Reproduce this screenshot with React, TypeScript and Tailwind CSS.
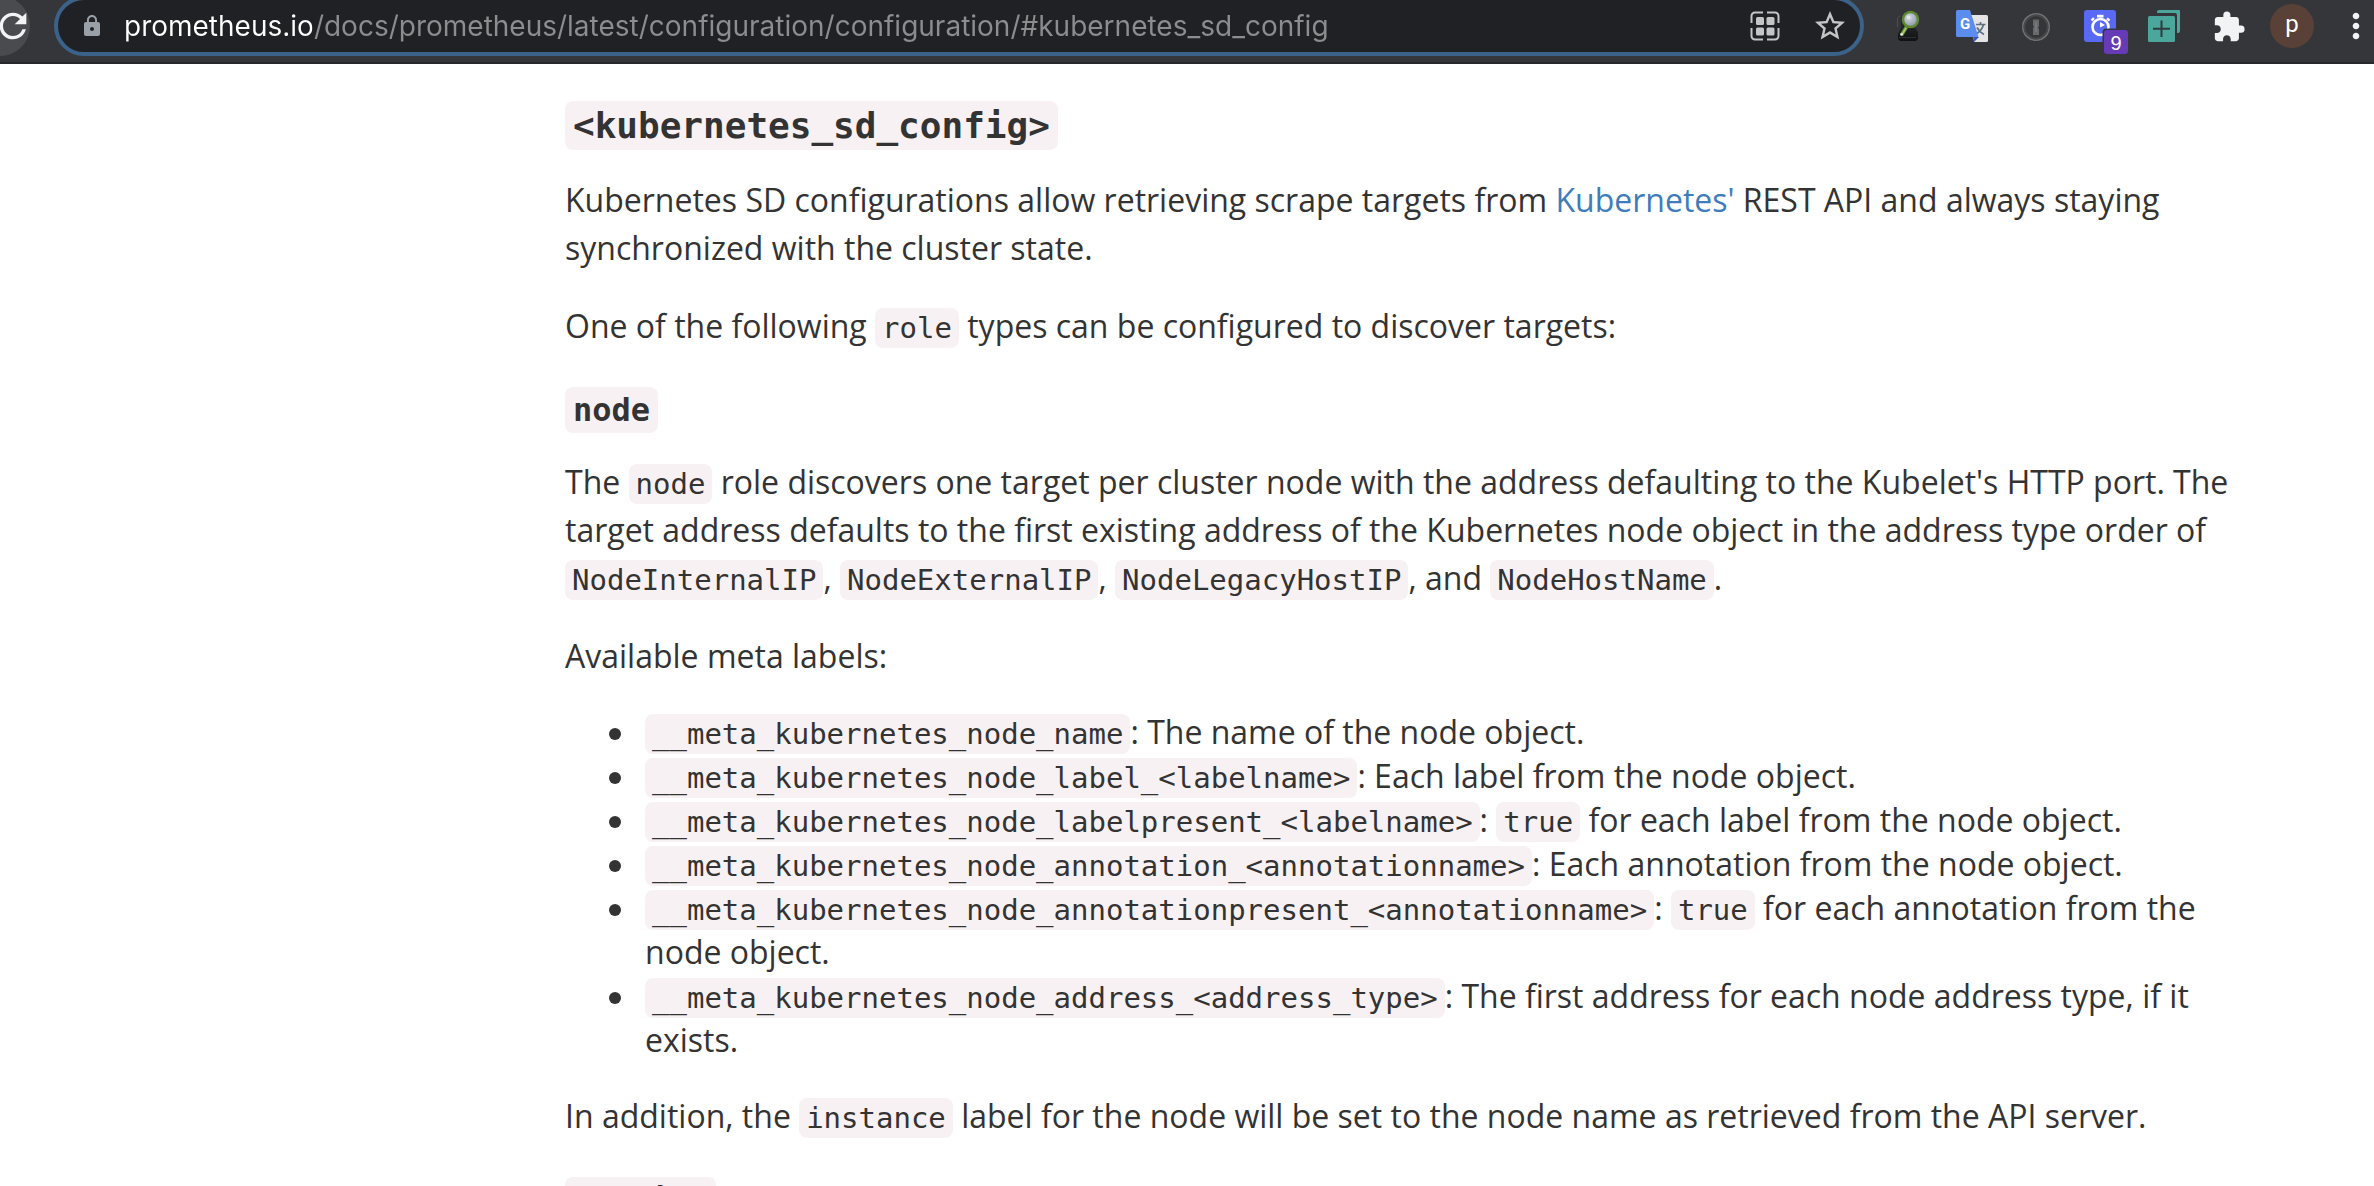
import type { ReactNode } from "react";
import { MdExtension, MdLock, MdMoreVert, MdRefresh, MdStarBorder } from "react-icons/md";

const metaLabels: { name: string; text: ReactNode }[] = [
  { name: "__meta_kubernetes_node_name", text: "The name of the node object." },
  { name: "__meta_kubernetes_node_label_<labelname>", text: "Each label from the node object." },
  {
    name: "__meta_kubernetes_node_labelpresent_<labelname>",
    text: (
      <>
        <Code>true</Code> for each label from the node object.
      </>
    ),
  },
  { name: "__meta_kubernetes_node_annotation_<annotationname>", text: "Each annotation from the node object." },
  {
    name: "__meta_kubernetes_node_annotationpresent_<annotationname>",
    text: (
      <>
        <Code>true</Code> for each annotation from the node object.
      </>
    ),
  },
  {
    name: "__meta_kubernetes_node_address_<address_type>",
    text: "The first address for each node address type, if it exists.",
  },
];

function Code({ children }: { children: ReactNode }) {
  return (
    <code className="rounded-lg bg-[#f8f1f4] px-[7px] py-[3px] font-['DejaVu_Sans_Mono',monospace] text-[29px] leading-none">
      {children}
    </code>
  );
}

function RoleHeading({ children }: { children: ReactNode }) {
  return (
    <h3 className="mt-[38px] mb-[30px] text-[36px] leading-[40px] font-bold">
      <code className="rounded-lg bg-[#f8f1f4] px-2 py-1 font-['DejaVu_Sans_Mono',monospace] text-[32px] leading-none">
        {children}
      </code>
    </h3>
  );
}

function QrIcon() {
  return (
    <svg width="30" height="30" viewBox="0 0 30 30" fill="none" stroke="#c4c5c7" strokeWidth="2">
      <path d="M1.5 12V5a3.500 3.500 0 0 1 3.500-3.500h8M17 1.500h8a3.500 3.500 0 0 1 3.500 3.500v7M28.500 17v8a3.500 3.500 0 0 1-3.500 3.500h-8M13 28.500H5A3.500 3.500 0 0 1 1.500 25v-8" />
      <g fill="#c4c5c7" stroke="none">
        <rect x="6" y="6" width="8" height="8" rx="1.500" />
        <rect x="16.500" y="6" width="8" height="8" rx="1.500" />
        <rect x="6" y="16.500" width="8" height="8" rx="1.500" />
        <rect x="16.500" y="16.500" width="8" height="8" rx="1.500" />
      </g>
    </svg>
  );
}

function InspectorIcon() {
  return (
    <svg width="32" height="32" viewBox="0 0 32 32">
      <defs>
        <linearGradient id="hat" x1="0" y1="0" x2="0" y2="1">
          <stop offset="0" stopColor="#303134" />
          <stop offset="1" stopColor="#101112" />
        </linearGradient>
        <radialGradient id="lens" cx="0.400" cy="0.350" r="0.700">
          <stop offset="0" stopColor="#d3d9e2" />
          <stop offset="1" stopColor="#8792a2" />
        </radialGradient>
      </defs>
      <path d="M8 6l-2.500 2v9" fill="none" stroke="#4e4f53" strokeWidth="1" />
      <path d="M9 6h9v12h5l3 4v7l-2 2H8l-2-2v-5l3-6z" fill="url(#hat)" />
      <path d="M7 27.500h17" stroke="#2e2f32" strokeWidth="1" />
      <path d="M14.500 17L9.500 25" stroke="#6f9a3c" strokeWidth="3.500" />
      <path d="M14 18L10 24.500" stroke="#b9d58a" strokeWidth="1.200" />
      <circle cx="9.500" cy="24.500" r="1.300" fill="#f1f3ea" />
      <circle cx="18.500" cy="9.500" r="7.500" fill="url(#lens)" stroke="#5f8a32" strokeWidth="2.500" />
      <circle cx="16.500" cy="7.500" r="2" fill="#eef1f5" opacity="0.600" />
    </svg>
  );
}

function TranslateIcon() {
  return (
    <svg width="32" height="32" viewBox="0 0 32 32">
      <path d="M14 5h16.500a1.500 1.500 0 0 1 1.500 1.500v24a1.500 1.500 0 0 1-1.500 1.500H18z" fill="#e4e4e4" />
      <path
        d="M20 14.500h9.500M24.500 12v2.500M27.500 14.500c-1 4-4 7.500-7.500 9.500M21 17.500c1.500 3 4 5.500 7 7"
        fill="none"
        stroke="#5c7180"
        strokeWidth="1.700"
      />
      <path d="M17.500 27h5.500l-5 5z" fill="#3b4fc0" />
      <path d="M1.500 0H14l8.500 27H1.500A1.500 1.500 0 0 1 0 25.500v-24A1.500 1.500 0 0 1 1.500 0z" fill="#5b8def" />
      <text x="4" y="18.500" fill="#fff" fontSize="15" fontWeight="700" fontFamily="Roboto, sans-serif">
        G
      </text>
    </svg>
  );
}

function KeyholeIcon() {
  return (
    <svg width="32" height="32" viewBox="0 0 32 32" fill="none">
      <circle cx="16" cy="17" r="13.200" stroke="#707173" strokeWidth="1.600" />
      <circle cx="16" cy="17" r="11.500" stroke="#48494a" strokeWidth="1.500" />
      <path d="M13 9.500h6v7l-1 1.500 1 1v6h-6v-7l1-1.500-1-1z" fill="#68696b" />
      <path d="M16 12v10" stroke="#858688" strokeWidth="1" />
    </svg>
  );
}

function TimerIcon() {
  return (
    <svg width="44" height="44" viewBox="0 0 44 44">
      <rect width="32" height="32" rx="3" fill="#5869f6" />
      <g fill="none" stroke="#fff">
        <circle cx="16.500" cy="17" r="8" strokeWidth="2.600" />
        <path d="M13 6.200h6.500" strokeWidth="2.800" />
        <path d="M7.500 10.500l2.500-2.300M23 8.300l2.500 2.400" strokeWidth="2.400" />
      </g>
      <path d="M16 12l5 3-5 2.500z" fill="#fff" />
      <rect x="18.500" y="18.500" width="27" height="27" rx="4" fill="#35363a" />
      <rect x="20" y="20" width="24" height="24" rx="3" fill="#673ab7" />
      <text x="32" y="39.500" textAnchor="middle" fill="#fff" fontSize="20" fontFamily="'Liberation Sans', sans-serif">
        9
      </text>
    </svg>
  );
}

function AddWindowIcon() {
  return (
    <svg width="32" height="32" viewBox="0 0 32 32">
      <path d="M9 3V2a2 2 0 0 1 2-2h20a1 1 0 0 1 1 1v20a2 2 0 0 1-2 2h-1V5a2 2 0 0 0-2-2z" fill="#4ba79c" />
      <rect y="6" width="27" height="26" rx="1.500" fill="#4ba79c" />
      <path d="M13.500 10.500v16.500M5 18.700h17" stroke="#2f3b3d" strokeWidth="2" />
    </svg>
  );
}

function Toolbar() {
  return (
    <header className="flex h-16 shrink-0 items-start overflow-hidden border-b-2 border-[#27282b] bg-[#35363a]">
      <button
        aria-label="Reload"
        className="-mt-1 -ml-4 flex h-[60px] w-[46px] shrink-0 items-center justify-center rounded-r-full bg-[#4a4b4e] pl-3 text-[#f1f3f4]"
      >
        <MdRefresh size={40} className="shrink-0" />
      </button>
      <form className="-mt-1 ml-6 flex h-[60px] min-w-0 flex-1 items-center rounded-full border-4 border-[#3b6288] bg-[#202124] pr-3 pl-[22px]">
        <MdLock size={24} className="shrink-0 text-[#9aa0a8]" />
        <input
          aria-label="Address"
          defaultValue="prometheus.io/docs/prometheus/latest/configuration/configuration/#kubernetes_sd_config"
          className="ml-5 h-full min-w-0 flex-1 bg-linear-to-r from-white from-[188px] to-[#8c8d8f] to-[188px] bg-clip-text font-['Inter',sans-serif] text-[28px] text-transparent outline-none"
        />
        <button type="button" aria-label="QR code" className="shrink-0">
          <QrIcon />
        </button>
        <button type="button" aria-label="Bookmark" className="ml-8 shrink-0 text-[#c4c5c7]">
          <MdStarBorder size={36} />
        </button>
      </form>
      <div className="mt-[10px] ml-7 flex h-8 shrink-0 items-start gap-8">
        <button aria-label="Inspector">
          <InspectorIcon />
        </button>
        <button aria-label="Translate">
          <TranslateIcon />
        </button>
        <button aria-label="Passwords">
          <KeyholeIcon />
        </button>
        <button aria-label="Timer" className="-mr-3">
          <TimerIcon />
        </button>
        <button aria-label="New window">
          <AddWindowIcon />
        </button>
        <button aria-label="Extensions" className="text-[#f1f3f4]">
          <MdExtension size={34} />
        </button>
      </div>
      <button
        aria-label="Profile"
        className="mt-1 ml-6 flex size-11 shrink-0 items-start justify-center rounded-full bg-[#5a4138] pt-1 font-['Roboto',sans-serif] text-[24px] leading-[32px] text-white"
      >
        p
      </button>
      <button aria-label="Menu" className="-mr-[2px] mt-[6px] ml-[22px] shrink-0 text-[#f1f3f4]">
        <MdMoreVert size={40} />
      </button>
    </header>
  );
}

export default function App() {
  return (
    <div className="flex h-screen flex-col overflow-hidden bg-white font-['Open_Sans',sans-serif] text-[#333]">
      <Toolbar />
      <main className="min-h-0 flex-1 overflow-hidden pt-[37px] pr-[112px] pl-[565px] text-[32px] leading-[48px]">
        <h2 className="mb-[31px] text-[40px] leading-[44px] font-bold">
          <code className="rounded-lg bg-[#f8f1f4] px-2 py-1 font-['DejaVu_Sans_Mono',monospace] text-[36px] leading-none">
            {"<kubernetes_sd_config>"}
          </code>
        </h2>
        <p className="mb-[30px]">
          Kubernetes SD configurations allow retrieving scrape targets from{" "}
          <a href="https://kubernetes.io/" className="text-[#3f7cbb]">
            Kubernetes'
          </a>{" "}
          REST API and always staying synchronized with the cluster state.
        </p>
        <p>
          One of the following <Code>role</Code> types can be configured to discover targets:
        </p>

        <RoleHeading>node</RoleHeading>
        <p className="mb-[30px]">
          The <Code>node</Code> role discovers one target per cluster node with the address defaulting to the
          Kubelet's HTTP port. The target address defaults to the first existing address of the Kubernetes node
          object in the address type order of <Code>NodeInternalIP</Code>, <Code>NodeExternalIP</Code>,{" "}
          <Code>NodeLegacyHostIP</Code>, and <Code>NodeHostName</Code>.
        </p>
        <p className="mb-[30px]">Available meta labels:</p>
        <ul className="mb-[30px] pl-20 leading-[44px]">
          {metaLabels.map((label) => (
            <li
              key={label.name}
              className="before:mr-6 before:-ml-9 before:inline-block before:size-3 before:rounded-full before:bg-[#333] before:align-[4px]"
            >
              <Code>{label.name}</Code>: {label.text}
            </li>
          ))}
        </ul>
        <p>
          In addition, the <Code>instance</Code> label for the node will be set to the node name as retrieved from
          the API server.
        </p>

        <RoleHeading>service</RoleHeading>
      </main>
    </div>
  );
}
